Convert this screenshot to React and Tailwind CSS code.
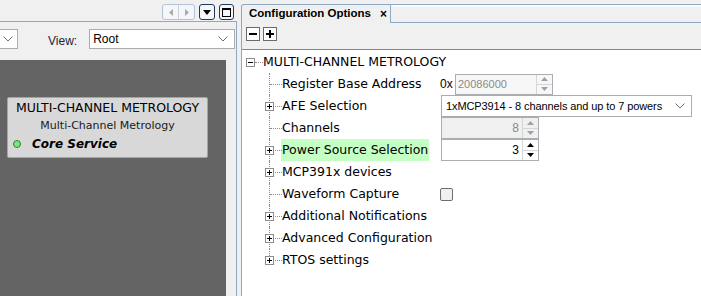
import React from 'react';

const font = { fontFamily: '"DejaVu Sans", Verdana, sans-serif' };
const lib = { fontFamily: '"Liberation Sans", Arial, sans-serif' };

const Spinner = ({ value, disabled }) => (
  <div className={`flex h-[22px] w-[98px] border border-[#abadb3] ${disabled ? 'bg-[#f0f0f0]' : 'bg-white'}`}>
    <div style={lib} className={`flex-1 flex items-center justify-end pr-[3px] text-[12px] ${disabled ? 'text-[#8a8a8a]' : 'text-black'}`}>{value}</div>
    <div className="w-[16px] flex flex-col border-l border-[#d6d6d6]">
      <div className="flex-1 flex items-center justify-center border-b border-[#d6d6d6]">
        <svg width="7" height="4" viewBox="0 0 7 4"><path d="M0 4 L3.5 0 L7 4Z" fill={disabled ? '#a0a0a0' : '#000'} /></svg>
      </div>
      <div className="flex-1 flex items-center justify-center">
        <svg width="7" height="4" viewBox="0 0 7 4"><path d="M0 0 L3.5 4 L7 0Z" fill={disabled ? '#a0a0a0' : '#000'} /></svg>
      </div>
    </div>
  </div>
);

const Chevron = () => (
  <svg width="10" height="6" viewBox="0 0 10 6" className="shrink-0"><path d="M0.5 0.5 L5 5 L9.5 0.5" fill="none" stroke="#707070" strokeWidth="1" /></svg>
);

const Box = ({ minus }) => (
  <div className="w-[9px] h-[9px] border border-[#8c8c8c] bg-white flex items-center justify-center relative">
    <div className="absolute w-[5px] h-[1px] bg-black" />
    {!minus && <div className="absolute w-[1px] h-[5px] bg-black" />}
  </div>
);

const rows = [
  { label: 'Register Base Address', leaf: true, value: 'addr' },
  { label: 'AFE Selection', value: 'afe' },
  { label: 'Channels', leaf: true, value: 'channels' },
  { label: 'Power Source Selection', value: 'power', hl: true },
  { label: 'MCP391x devices' },
  { label: 'Waveform Capture', leaf: true, value: 'check' },
  { label: 'Additional Notifications' },
  { label: 'Advanced Configuration' },
  { label: 'RTOS settings', last: true },
];

const renderValue = (v) => {
  if (v === 'addr')
    return (
      <div className="flex items-center" style={lib}>
        <span className="text-[12px] w-[15px]">0x</span>
        <div className="flex h-[21px] w-[98px] border border-[#abadb3] bg-[#f7f7f7]">
          <div className="flex-1 flex items-center pl-[2px] text-[11px] text-[#8a8a8a]">20086000</div>
          <div className="w-[16px] flex flex-col border-l border-[#d6d6d6]">
            <div className="flex-1 flex items-center justify-center border-b border-[#d6d6d6]">
              <svg width="7" height="4" viewBox="0 0 7 4"><path d="M0 4 L3.5 0 L7 4Z" fill="#a0a0a0" /></svg>
            </div>
            <div className="flex-1 flex items-center justify-center">
              <svg width="7" height="4" viewBox="0 0 7 4"><path d="M0 0 L3.5 4 L7 0Z" fill="#a0a0a0" /></svg>
            </div>
          </div>
        </div>
      </div>
    );
  if (v === 'afe')
    return (
      <div style={lib} className="flex items-center justify-between h-[22px] w-[251px] ml-[1px] border border-[#acacac] bg-white pl-[4px] pr-[6px] text-[11px] tracking-[-0.1px] whitespace-nowrap overflow-hidden">
        <span>1xMCP3914 - 8 channels and up to 7 powers</span>
        <Chevron />
      </div>
    );
  if (v === 'channels') return <div className="ml-[1px]"><Spinner value="8" disabled /></div>;
  if (v === 'power') return <div className="ml-[1px]"><Spinner value="3" /></div>;
  if (v === 'check')
    return <div className="w-[13px] h-[13px] rounded-[2px] border border-[#6e6e6e] bg-[#f0f0f0]" />;
  return null;
};

export default function App() {
  return (
    <div className="flex w-[701px] h-[296px] bg-[#f0f0f0] overflow-hidden text-[#000] whitespace-nowrap" style={font}>
      {/* left pane */}
      <div className="w-[237px] flex flex-col shrink-0">
        <div className="h-[21px] shrink-0 flex items-start justify-end pt-[4px] pr-[3px] gap-[4px]">
          <div className="flex h-[16px] w-[33px] rounded-[3px] border border-[#b6c3d3] bg-[#f4f6f9]">
            <div className="flex-1 flex items-center justify-center border-r border-[#c8d2de]">
              <svg width="4" height="7" viewBox="0 0 4 7"><path d="M4 0 L0 3.5 L4 7Z" fill="#a9a9a9" /></svg>
            </div>
            <div className="flex-1 flex items-center justify-center">
              <svg width="4" height="7" viewBox="0 0 4 7"><path d="M0 0 L4 3.5 L0 7Z" fill="#a9a9a9" /></svg>
            </div>
          </div>
          <div className="h-[16px] w-[16px] rounded-[3px] border border-[#1f3b5e] bg-[#f4f6f9] flex items-center justify-center">
            <svg width="8" height="5" viewBox="0 0 8 5"><path d="M0 0 L8 0 L4 5Z" fill="#000" /></svg>
          </div>
          <div className="h-[16px] w-[15px] rounded-[3px] border border-[#1f3b5e] bg-[#f4f6f9] flex items-center justify-center">
            <div className="w-[9px] h-[9px] border border-black border-t-2" />
          </div>
        </div>
        <div className="flex-1 flex flex-col border-t border-r border-[#8fa8c6]">
          <div className="h-[38px] shrink-0 flex items-start pt-[7px] text-[12px]">
            <div className="w-[18px] h-[20px] border border-[#acacac] border-l-0 bg-white flex items-center justify-end pr-[4px]">
              <Chevron />
            </div>
            <span style={lib} className="ml-[30px] mt-[3px] text-[#1e1e3c]">View:</span>
            <div style={lib} className="ml-[12px] w-[146px] h-[20px] border border-[#acacac] bg-white flex items-center justify-between pl-[3px] pr-[6px]">
              <span>Root</span>
              <Chevron />
            </div>
          </div>
          <div className="flex-1 flex">
            <div className="w-[226px] bg-[#646464] pt-[37px] pl-[7px]">
              <div className="w-[201px] h-[61px] border border-[#52e052] rounded-[2px] bg-[#d8d8d8] flex flex-col">
                <div className="text-center text-[12.5px] mt-[2px] leading-[16px]">MULTI-CHANNEL METROLOGY</div>
                <div className="text-center text-[11px] mt-[3px] leading-[14px] text-[#1a1a1a]">Multi-Channel Metrology</div>
                <div className="flex items-center mt-[3px] pl-[5px]">
                  <div className="w-[8px] h-[8px] rounded-full bg-[#78e878] border border-[#3a7a3a]" />
                  <span className="ml-[11px] text-[12px] font-bold italic leading-[16px]">Core Service</span>
                </div>
              </div>
            </div>
            <div className="flex-1" />
          </div>
        </div>
      </div>
      <div className="w-[4px] shrink-0" />
      {/* right pane */}
      <div className="flex-1 flex flex-col">
        <div className="h-[23px] shrink-0 flex items-end">
          <div style={lib} className="h-[19px] w-[150px] rounded-tl-[3px] border-l border-t border-r border-[#8fa8c6] bg-[#f0f0f0] flex items-center pl-[7px] text-[11.5px] font-bold">
            <span>Configuration Options</span>
            <span className="ml-[9px] text-[12px]">×</span>
          </div>
          <div className="flex-1 h-[19px] border-t border-[#8fa8c6] border-b">
            <div className="h-[2px] bg-[#fbfbfb]" />
          </div>
        </div>
        <div className="flex-1 flex flex-col border-l border-[#8fa8c6]">
          <div className="h-[27px] shrink-0 flex items-start pt-[4px] pl-[4px] gap-[3px] border-b border-[#828790]">
            <div className="w-[14px] h-[14px] border border-[#6a6a6a] bg-white flex items-center justify-center">
              <div className="w-[8px] h-[2px] bg-black" />
            </div>
            <div className="w-[14px] h-[14px] border border-[#6a6a6a] bg-white flex items-center justify-center relative">
              <div className="absolute w-[8px] h-[2px] bg-black" />
              <div className="absolute w-[2px] h-[8px] bg-black" />
            </div>
          </div>
          <div className="flex-1 bg-white pt-[1px] pl-[4px] text-[12.5px]">
            <div className="flex items-center h-[22px]">
              <Box minus />
              <div className="w-[8px] border-t border-dotted border-[#8c8c8c]" />
              <span>MULTI-CHANNEL METROLOGY</span>
            </div>
            {rows.map((r) => (
              <div key={r.label} className="flex items-center h-[22px] ml-[19px]">
                <div className="w-[17px] self-stretch relative">
                  <div className={`absolute left-[4px] top-0 border-l border-dotted border-[#8c8c8c] ${r.last ? 'h-[11px]' : 'h-[22px]'}`} />
                  <div className="absolute left-[5px] right-0 top-[11px] border-t border-dotted border-[#8c8c8c]" />
                  {!r.leaf && (
                    <div className="absolute left-0 top-[7px]">
                      <Box />
                    </div>
                  )}
                </div>
                <div className="w-[158px] flex items-center">
                  <span className={r.hl ? 'bg-[#c4ffc4] h-[22px] px-[1px] -ml-[1px] flex items-center' : ''}>{r.label}</span>
                </div>
                {renderValue(r.value)}
              </div>
            ))}
          </div>
        </div>
      </div>
    </div>
  );
}
